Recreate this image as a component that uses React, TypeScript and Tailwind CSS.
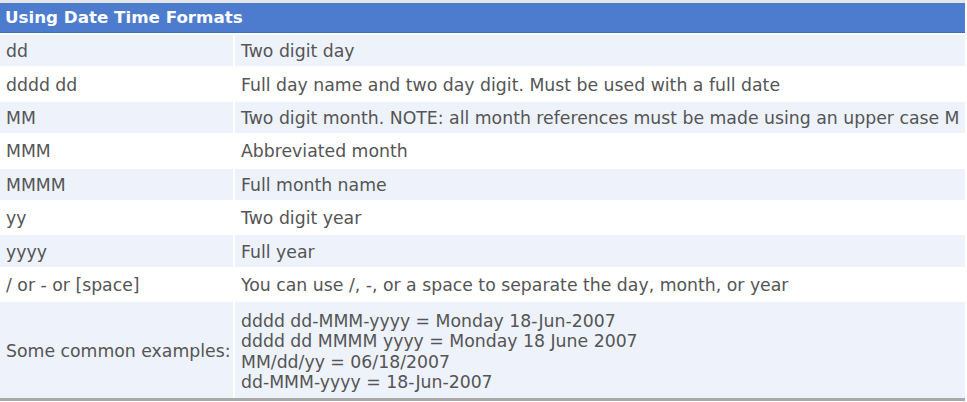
const rows: [string, string][] = [
  ["dd", "Two digit day"],
  ["dddd dd", "Full day name and two day digit. Must be used with a full date"],
  ["MM", "Two digit month. NOTE: all month references must be made using an upper case M"],
  ["MMM", "Abbreviated month"],
  ["MMMM", "Full month name"],
  ["yy", "Two digit year"],
  ["yyyy", "Full year"],
  ["/ or - or [space]", "You can use /, -, or a space to separate the day, month, or year"],
];

const examples = [
  "dddd dd-MMM-yyyy = Monday 18-Jun-2007",
  "dddd dd MMMM yyyy = Monday 18 June 2007",
  "MM/dd/yy = 06/18/2007",
  "dd-MMM-yyyy = 18-Jun-2007",
];

export default function App() {
  return (
    <div className="w-[967px] h-[402px] bg-white overflow-hidden" style={{ fontFamily: '"DejaVu Sans", Verdana, sans-serif' }}>
      <div className="w-[965px] border-t-[3px] border-[#e4e6ea] border-b-[3px] border-b-[#a9a9a9]">
        {/* header */}
        <div className="h-[30px] bg-[#4d7ccf] border-b border-[#3f6cbd] pl-[5px] flex items-center text-white font-bold text-[16.7px]">
          Using Date Time Formats
        </div>
        <div className="flex flex-col gap-[2px] pt-[2px] text-[#555] text-[17.3px]">
          {rows.map(([k, v], i) => (
            <div key={k} className="grid grid-cols-[233px_1fr] gap-[2px] h-[31.4px]">
              <div className={`${i % 2 === 0 ? "bg-[#edf2fb]" : "bg-white"} pl-[6px] pt-[3px] flex items-center whitespace-nowrap`}>{k}</div>
              <div className={`${i % 2 === 0 ? "bg-[#edf2fb]" : "bg-white"} pl-[6px] pt-[3px] flex items-center whitespace-nowrap`}>{v}</div>
            </div>
          ))}
          <div className="grid grid-cols-[233px_1fr] gap-[2px] h-[96px]">
            <div className="bg-[#edf2fb] pl-[6px] pt-[3px] flex items-center whitespace-nowrap">Some common examples:</div>
            <div className="bg-[#edf2fb] pl-[6px] pt-[3px] flex flex-col justify-center leading-[20.5px] whitespace-nowrap">
              {examples.map((e) => (
                <div key={e}>{e}</div>
              ))}
            </div>
          </div>
        </div>
      </div>
    </div>
  );
}
